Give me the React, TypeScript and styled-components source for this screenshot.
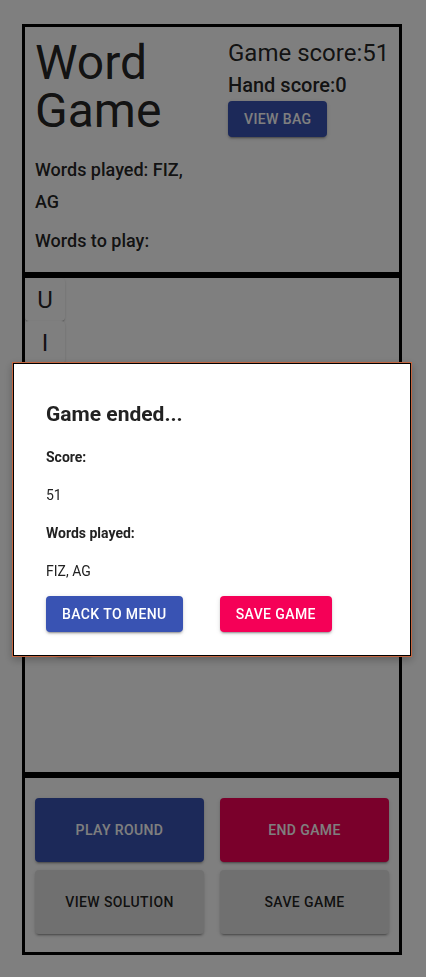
import React from "react";
import styled, { createGlobalStyle } from "styled-components";

const Global = createGlobalStyle`
  html, body { margin: 0; padding: 0; background: #ffffff; }
  body { font-family: Roboto, "Noto Sans", "Liberation Sans", sans-serif; color: rgba(0,0,0,0.87); }
  * { box-sizing: border-box; }
`;

const Page = styled.div`
  padding: 24px 0 22px 22px;
`;

const Board = styled.div`
  width: 380px;
  display: flex;
  flex-direction: column;
`;

const Section = styled.section<{ $h?: number }>`
  border: 3px solid #000;
  ${(p) => (p.$h ? `height: ${p.$h}px;` : "")}
`;

const Header = styled(Section)`
  display: grid;
  grid-template-columns: 175px 1fr;
  column-gap: 18px;
  padding: 10px 10px 15px 10px;
`;

const LeftCol = styled.div`
  display: flex;
  flex-direction: column;
`;

const Title = styled.h1`
  margin: 2px 0 19px 0;
  font-size: 48px;
  line-height: 48px;
  font-weight: 400;
`;

const Info = styled.p<{ $gap?: number }>`
  margin: ${(p) => p.$gap ?? 0}px 0 0 0;
  font-size: 18px;
  line-height: 32px;
  font-weight: 500;
`;

const RightCol = styled.div`
  display: flex;
  flex-direction: column;
  align-items: flex-start;
  white-space: nowrap;
`;

const GameScore = styled.div`
  font-size: 24px;
  line-height: 32px;
  font-weight: 400;
`;

const HandScore = styled.div`
  font-size: 20px;
  line-height: 32px;
  font-weight: 500;
`;

const Btn = styled.button<{ $color: "primary" | "secondary" | "default"; $big?: boolean }>`
  border: 0;
  border-radius: 4px;
  font-family: Roboto, "Noto Sans", sans-serif;
  font-size: 14px;
  font-weight: 500;
  letter-spacing: 0.4px;
  text-transform: uppercase;
  padding: 0 16px;
  height: ${(p) => (p.$big ? 64 : 36)}px;
  line-height: 1;
  cursor: pointer;
  background: ${(p) => (p.$color === "primary" ? "#3953b3" : p.$color === "secondary" ? "#f50057" : "#e0e0e0")};
  color: ${(p) => (p.$color === "default" ? "rgba(0,0,0,0.87)" : "#fff")};
  box-shadow: 0 3px 1px -2px rgba(0,0,0,0.2), 0 2px 2px 0 rgba(0,0,0,0.14), 0 1px 5px 0 rgba(0,0,0,0.12);
`;

const TileArea = styled(Section)`
  display: flex;
  flex-direction: column;
  align-items: flex-start;
`;

const TileColumn = styled.div`
  display: flex;
  flex-direction: column;
`;

const Tile = styled.div`
  width: 40px;
  height: 43px;
  display: flex;
  align-items: center;
  justify-content: center;
  font-size: 24px;
  background: #fff;
  border-radius: 4px;
  box-shadow: 0 2px 1px -1px rgba(0,0,0,0.2), 0 1px 1px 0 rgba(0,0,0,0.14), 0 1px 3px 0 rgba(0,0,0,0.12);
`;

const HiddenAction = styled(Btn)`
  margin: 256px 0 0 30px;
  width: 38px;
  padding: 0;
`;

const Controls = styled(Section)`
  display: grid;
  grid-template-columns: 1fr 1fr;
  column-gap: 16px;
  row-gap: 8px;
  padding: 20px 10px 18px 10px;
`;

const Overlay = styled.div`
  position: fixed;
  inset: 0;
  background: rgba(0,0,0,0.5);
`;

const Modal = styled.div`
  position: fixed;
  top: 363px;
  left: 13px;
  width: 398px;
  background: #fff;
  border: 1px solid #000;
  box-shadow: 0 0 0 1px #c4653f, 0 3px 8px 1px rgba(0,0,0,0.25);
  padding: 38px 32px 23px 32px;
  display: flex;
  flex-direction: column;
`;

const ModalTitle = styled.h2`
  margin: 0 0 20px 0;
  font-size: 21px;
  line-height: 24px;
  font-weight: 700;
  color: #222;
`;

const ModalText = styled.p<{ $bold?: boolean }>`
  margin: 0 0 16px 0;
  font-size: 14px;
  line-height: 22px;
  font-weight: ${(p) => (p.$bold ? 700 : 400)};
  color: #222;
  &:last-of-type { margin-bottom: 0; }
`;

const ModalActions = styled.div`
  display: flex;
  gap: 37px;
  margin-top: 14px;
`;

export default function App() {
  return (
    <>
      <Global />
      <Page>
        <Board>
          <Header $h={251}>
            <LeftCol>
              <Title>Word Game</Title>
              <Info>Words played: FIZ, AG</Info>
              <Info $gap={7}>Words to play:</Info>
            </LeftCol>
            <RightCol>
              <GameScore>Game score:51</GameScore>
              <HandScore>Hand score:0</HandScore>
              <Btn $color="primary">View bag</Btn>
            </RightCol>
          </Header>
          <TileArea $h={500}>
            <TileColumn>
              {["U", "I"].map((l, i) => (
                <Tile key={i}>{l}</Tile>
              ))}
            </TileColumn>
            <HiddenAction $color="default" aria-label="hidden action" />
          </TileArea>
          <Controls $h={180}>
            <Btn $color="primary" $big>Play round</Btn>
            <Btn $color="secondary" $big>End game</Btn>
            <Btn $color="default" $big>View solution</Btn>
            <Btn $color="default" $big>Save game</Btn>
          </Controls>
        </Board>
      </Page>
      <Overlay />
      <Modal>
        <ModalTitle>Game ended...</ModalTitle>
        <ModalText $bold>Score:</ModalText>
        <ModalText>51</ModalText>
        <ModalText $bold>Words played:</ModalText>
        <ModalText>FIZ, AG</ModalText>
        <ModalActions>
          <Btn $color="primary">Back to menu</Btn>
          <Btn $color="secondary">Save game</Btn>
        </ModalActions>
      </Modal>
    </>
  );
}
